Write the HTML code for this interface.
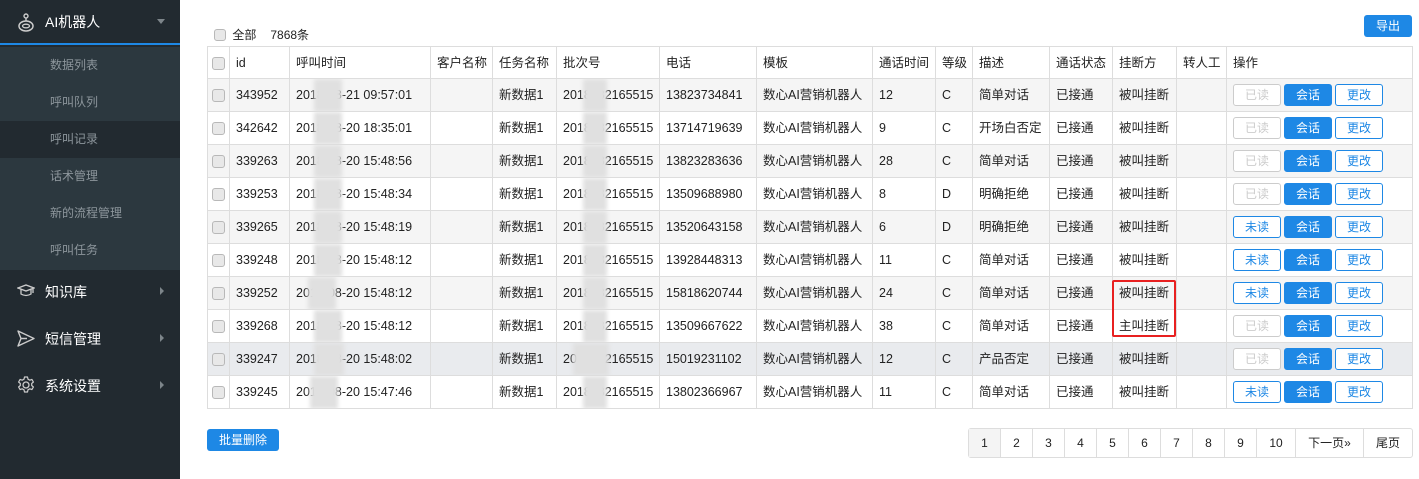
<!DOCTYPE html>
<html><head><meta charset="utf-8">
<style>
*{box-sizing:border-box;margin:0;padding:0}
body{width:1419px;height:479px;overflow:hidden;background:#fff;font-family:"Liberation Sans","Noto Sans CJK SC",sans-serif;font-size:12px;color:#222;position:relative}
.side{position:absolute;left:0;top:0;width:180px;height:479px;background:#222a30}
.side .top{position:absolute;left:0;top:0;width:180px;height:45px;border-bottom:2px solid #1e88e5;color:#fff;font-size:14px}
.sub{position:absolute;left:0;top:47px;width:180px;height:223px;background:#2c383f}
.sub div{height:37px;line-height:37px;padding-left:50px;color:#8d969c;font-size:12px}
.sub div.act{background:#222a30}
.menu{position:absolute;left:0;width:180px;color:#fff;font-size:14px}
.arr{position:absolute;left:160px;width:0;height:0;border-top:4px solid transparent;border-bottom:4px solid transparent;border-left:4px solid #7d858a}
.cb{display:inline-block;width:13px;height:13px;border:1px solid #b8b8b8;border-radius:3px;background:#e8e8e8;vertical-align:middle}
table{position:absolute;left:207px;top:46px;width:1205px;border-collapse:collapse;border:1px solid #ddd;table-layout:fixed}
td{border:1px solid #ddd;height:33px;padding:0 6px;white-space:nowrap;overflow:hidden;position:relative;font-size:12.5px;line-height:16px;vertical-align:middle}
tr.h td{height:32px}
tr.g td{background:#f5f5f5}
tr.k td{background:#e9ebee}
.b{display:inline-block;width:48px;height:22px;line-height:20px;text-align:center;border-radius:3px;font-size:12px;border:1px solid #1e88e5;color:#1e88e5;background:#fff;margin-right:3px;vertical-align:middle}
.b.d{border-color:#ccc;color:#ccc}
.b.s{background:#1e88e5;color:#fff}
.blur{position:absolute;top:0;height:33px;background:#e0e0e0;filter:blur(2px)}
.pg{position:absolute;left:968px;top:428px;height:30px;border:1px solid #ddd;border-radius:3px;display:flex}
.pg div{height:28px;line-height:28px;text-align:center;border-right:1px solid #ddd;font-size:12px}
.pg div:last-child{border-right:none}
</style></head><body>
<div class="side">
 <div class="top">
  <svg style="position:absolute;left:17px;top:13px" width="18" height="20" viewBox="0 0 18 20"><circle cx="9" cy="3" r="2" fill="none" stroke="#ccc" stroke-width="1.4"/><line x1="9" y1="5" x2="9" y2="8" stroke="#ccc" stroke-width="1.4"/><ellipse cx="9" cy="13" rx="7" ry="5" fill="none" stroke="#ccc" stroke-width="1.5"/><ellipse cx="9" cy="13" rx="3.5" ry="1.8" fill="none" stroke="#ccc" stroke-width="1.3"/></svg>
  <span style="position:absolute;left:45px;top:12px">AI机器人</span>
  <div style="position:absolute;left:157px;top:19px;border-left:4px solid transparent;border-right:4px solid transparent;border-top:5px solid #7d858a"></div>
 </div>
 <div class="sub">
  <div>数据列表</div><div>呼叫队列</div><div class="act">呼叫记录</div><div>话术管理</div><div>新的流程管理</div><div>呼叫任务</div>
 </div>
 <div class="menu" style="top:282px">
  <svg style="position:absolute;left:17px;top:2px" width="18" height="14" viewBox="0 0 18 14"><path d="M1 4L9 1L17 4L9 7Z M4 5.5V10Q9 13 14 10V5.5 M16 4.5V9" fill="none" stroke="#ccc" stroke-width="1.3"/></svg>
  <span style="position:absolute;left:45px;top:0">知识库</span><div class="arr" style="top:5px"></div></div>
 <div class="menu" style="top:329px">
  <svg style="position:absolute;left:17px;top:1px" width="18" height="17" viewBox="0 0 18 17"><path d="M1 1L17 8.5L1 16L4 8.5Z M4 8.5H10" fill="none" stroke="#ccc" stroke-width="1.4" stroke-linejoin="round"/></svg>
  <span style="position:absolute;left:45px;top:0">短信管理</span><div class="arr" style="top:5px"></div></div>
 <div class="menu" style="top:376px">
  <svg style="position:absolute;left:17px;top:0" width="18" height="18" viewBox="0 0 18 18"><circle cx="9" cy="9" r="3" fill="none" stroke="#ccc" stroke-width="1.3"/><path d="M7.5 1h3l.5 2.2 1.8 1 2.1-.8 1.5 2.6-1.7 1.5v2l1.7 1.5-1.5 2.6-2.1-.8-1.8 1-.5 2.2h-3l-.5-2.2-1.8-1-2.1.8-1.5-2.6 1.7-1.5v-2L1.6 6l1.5-2.6 2.1.8 1.8-1z" fill="none" stroke="#ccc" stroke-width="1.2" stroke-linejoin="round"/></svg>
  <span style="position:absolute;left:45px;top:0">系统设置</span><div class="arr" style="top:5px"></div></div>
</div>

<div style="position:absolute;left:214px;top:26px"><span class="cb" style="width:12px;height:12px"></span> <span style="vertical-align:middle;margin-left:3px">全部</span><span style="vertical-align:middle;margin-left:14px">7868条</span></div>
<div style="position:absolute;left:1364px;top:15px;width:48px;height:22px;line-height:22px;background:#1e88e5;color:#fff;text-align:center;border-radius:3px">导出</div>

<table>
<colgroup><col style="width:22px"><col style="width:60px"><col style="width:141px"><col style="width:62px"><col style="width:64px"><col style="width:103px"><col style="width:97px"><col style="width:116px"><col style="width:63px"><col style="width:37px"><col style="width:77px"><col style="width:63px"><col style="width:64px"><col style="width:50px"><col style="width:186px"></colgroup>
<tr class="h"><td style="padding:0 4px"><span class="cb"></span></td><td>id</td><td>呼叫时间</td><td>客户名称</td><td>任务名称</td><td>批次号</td><td>电话</td><td>模板</td><td>通话时间</td><td>等级</td><td>描述</td><td>通话状态</td><td>挂断方</td><td>转人工</td><td>操作</td></tr>
<tr class="g"><td style="padding:0 4px"><span class="cb"></span></td><td>343952</td><td>2018-08-21 09:57:01<div class="blur" style="left:24px;width:28px"></div></td><td></td><td>新数据1</td><td>2018082165515<div class="blur" style="left:26px;width:24px"></div></td><td>13823734841</td><td>数心AI营销机器人</td><td>12</td><td>C</td><td>简单对话</td><td>已接通</td><td>被叫挂断</td><td></td><td><span class="b d">已读</span><span class="b s">会话</span><span class="b">更改</span></td></tr>
<tr><td style="padding:0 4px"><span class="cb"></span></td><td>342642</td><td>2018-08-20 18:35:01<div class="blur" style="left:24px;width:28px"></div></td><td></td><td>新数据1</td><td>2018082165515<div class="blur" style="left:26px;width:24px"></div></td><td>13714719639</td><td>数心AI营销机器人</td><td>9</td><td>C</td><td>开场白否定</td><td>已接通</td><td>被叫挂断</td><td></td><td><span class="b d">已读</span><span class="b s">会话</span><span class="b">更改</span></td></tr>
<tr class="g"><td style="padding:0 4px"><span class="cb"></span></td><td>339263</td><td>2018-08-20 15:48:56<div class="blur" style="left:24px;width:28px"></div></td><td></td><td>新数据1</td><td>2018082165515<div class="blur" style="left:26px;width:24px"></div></td><td>13823283636</td><td>数心AI营销机器人</td><td>28</td><td>C</td><td>简单对话</td><td>已接通</td><td>被叫挂断</td><td></td><td><span class="b d">已读</span><span class="b s">会话</span><span class="b">更改</span></td></tr>
<tr><td style="padding:0 4px"><span class="cb"></span></td><td>339253</td><td>2018-08-20 15:48:34<div class="blur" style="left:24px;width:28px"></div></td><td></td><td>新数据1</td><td>2018082165515<div class="blur" style="left:26px;width:24px"></div></td><td>13509688980</td><td>数心AI营销机器人</td><td>8</td><td>D</td><td>明确拒绝</td><td>已接通</td><td>被叫挂断</td><td></td><td><span class="b d">已读</span><span class="b s">会话</span><span class="b">更改</span></td></tr>
<tr class="g"><td style="padding:0 4px"><span class="cb"></span></td><td>339265</td><td>2018-08-20 15:48:19<div class="blur" style="left:24px;width:28px"></div></td><td></td><td>新数据1</td><td>2018082165515<div class="blur" style="left:26px;width:24px"></div></td><td>13520643158</td><td>数心AI营销机器人</td><td>6</td><td>D</td><td>明确拒绝</td><td>已接通</td><td>被叫挂断</td><td></td><td><span class="b">未读</span><span class="b s">会话</span><span class="b">更改</span></td></tr>
<tr><td style="padding:0 4px"><span class="cb"></span></td><td>339248</td><td>2018-08-20 15:48:12<div class="blur" style="left:24px;width:28px"></div></td><td></td><td>新数据1</td><td>2018082165515<div class="blur" style="left:26px;width:24px"></div></td><td>13928448313</td><td>数心AI营销机器人</td><td>11</td><td>C</td><td>简单对话</td><td>已接通</td><td>被叫挂断</td><td></td><td><span class="b">未读</span><span class="b s">会话</span><span class="b">更改</span></td></tr>
<tr class="g"><td style="padding:0 4px"><span class="cb"></span></td><td>339252</td><td>2018-08-20 15:48:12<div class="blur" style="left:18px;width:28px"></div></td><td></td><td>新数据1</td><td>2018082165515<div class="blur" style="left:26px;width:24px"></div></td><td>15818620744</td><td>数心AI营销机器人</td><td>24</td><td>C</td><td>简单对话</td><td>已接通</td><td>被叫挂断</td><td></td><td><span class="b">未读</span><span class="b s">会话</span><span class="b">更改</span></td></tr>
<tr><td style="padding:0 4px"><span class="cb"></span></td><td>339268</td><td>2018-08-20 15:48:12<div class="blur" style="left:24px;width:28px"></div></td><td></td><td>新数据1</td><td>2018082165515<div class="blur" style="left:26px;width:24px"></div></td><td>13509667622</td><td>数心AI营销机器人</td><td>38</td><td>C</td><td>简单对话</td><td>已接通</td><td>主叫挂断</td><td></td><td><span class="b d">已读</span><span class="b s">会话</span><span class="b">更改</span></td></tr>
<tr class="k"><td style="padding:0 4px"><span class="cb"></span></td><td>339247</td><td>2018-08-20 15:48:02<div class="blur" style="left:24px;width:30px"></div></td><td></td><td>新数据1</td><td>2018082165515<div class="blur" style="left:16px;width:36px"></div></td><td>15019231102</td><td>数心AI营销机器人</td><td>12</td><td>C</td><td>产品否定</td><td>已接通</td><td>被叫挂断</td><td></td><td><span class="b d">已读</span><span class="b s">会话</span><span class="b">更改</span></td></tr>
<tr><td style="padding:0 4px"><span class="cb"></span></td><td>339245</td><td>2018-08-20 15:47:46<div class="blur" style="left:20px;width:28px"></div></td><td></td><td>新数据1</td><td>2018082165515<div class="blur" style="left:26px;width:24px"></div></td><td>13802366967</td><td>数心AI营销机器人</td><td>11</td><td>C</td><td>简单对话</td><td>已接通</td><td>被叫挂断</td><td></td><td><span class="b">未读</span><span class="b s">会话</span><span class="b">更改</span></td></tr>
</table>
<div style="position:absolute;left:1112px;top:280px;width:64px;height:57px;border:2px solid #e82020;border-radius:2px"></div>

<div style="position:absolute;left:207px;top:429px;width:72px;height:22px;line-height:22px;background:#1e88e5;color:#fff;text-align:center;border-radius:3px">批量删除</div>
<div class="pg">
 <div style="width:32px;background:#f4f4f4">1</div><div style="width:32px">2</div><div style="width:32px">3</div><div style="width:32px">4</div><div style="width:32px">5</div><div style="width:32px">6</div><div style="width:32px">7</div><div style="width:32px">8</div><div style="width:32px">9</div><div style="width:39px">10</div><div style="width:68px">下一页»</div><div style="width:48px">尾页</div>
</div>
</body></html>
